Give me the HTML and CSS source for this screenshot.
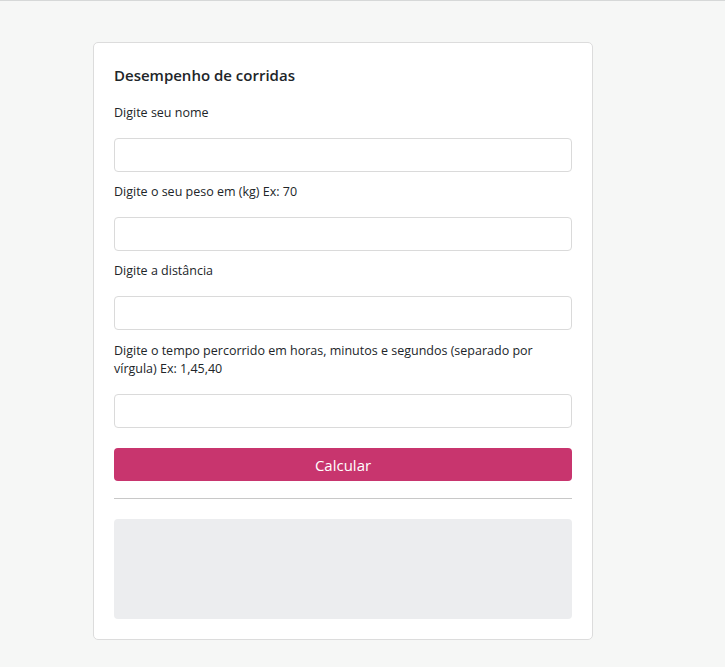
FILE: index.html
```html
<!DOCTYPE html>
<html lang="pt-BR">
<head>
<meta charset="utf-8">
<title>Desempenho de corridas</title>
<link rel="stylesheet" href="styles.css">
</head>
<body>
<div class="topline"></div>
<main class="page">
  <section class="card">
    <h1 class="title">Desempenho de corridas</h1>
    <label class="label" for="nome">Digite seu nome</label>
    <input class="field" id="nome" type="text">
    <label class="label" for="peso">Digite o seu peso em (kg) Ex: 70</label>
    <input class="field" id="peso" type="text">
    <label class="label" for="dist">Digite a distância</label>
    <input class="field" id="dist" type="text">
    <label class="label label-wide" for="tempo">Digite o tempo percorrido em horas, minutos e segundos (separado por vírgula) Ex: 1,45,40</label>
    <input class="field" id="tempo" type="text">
    <button class="btn" type="button">Calcular</button>
    <hr class="sep">
    <div class="result"></div>
  </section>
</main>
</body>
</html>
```

FILE: styles.css
```css
html, body {
  margin: 0;
  padding: 0;
  background: #f6f7f6;
  font-family: "Open Sans", "Noto Sans", sans-serif;
  color: #212529;
}
.topline {
  height: 1px;
  background: #d6d8d8;
}
.page {
  padding: 41px 0 0 93px;
}
.card {
  box-sizing: border-box;
  width: 500px;
  background: #fff;
  border: 1px solid #dcdcdc;
  border-radius: 5px;
  padding: 21px 20px 20px;
  display: flex;
  flex-direction: column;
}
.title {
  margin: 0 0 18px;
  font-size: 15px;
  font-weight: 600;
  line-height: 22px;
}
.label {
  font-size: 12.5px;
  line-height: 18px;
  margin-bottom: 16px;
}
.label-wide {
  margin-top: 1px;
}
.field {
  box-sizing: border-box;
  width: 100%;
  height: 34px;
  border: 1px solid #dadada;
  border-radius: 4px;
  margin: 0 0 11px;
  padding: 0 10px;
  font: inherit;
}
.field:last-of-type {
  margin-bottom: 20px;
}
.btn {
  height: 33px;
  border: none;
  border-radius: 4px;
  background: #c8356e;
  color: #fff;
  font-family: inherit;
  font-size: 15px;
  padding: 0;
}
.sep {
  margin: 17px 0 20px;
  border: none;
  border-top: 1px solid #c8c8c8;
  height: 0;
}
.result {
  height: 100px;
  background: #ecedef;
  border-radius: 4px;
}
```
